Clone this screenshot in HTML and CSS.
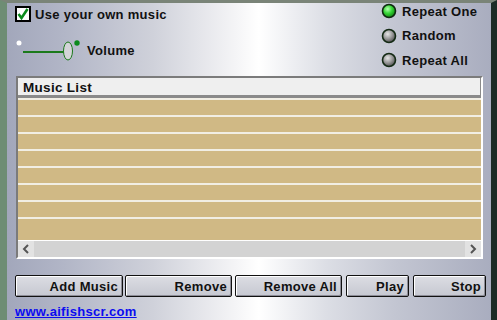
FILE: index.html
```html
<!DOCTYPE html>
<html lang="en">
<head>
    <meta charset="UTF-8">
    <title>Music Options</title>
    <link rel="stylesheet" href="styles.css">
</head>
<body>
    <div class="window">
        <div class="top">
            <div class="left-opts">
                <label class="check-row">
                    <svg class="checkbox" width="16" height="16" viewBox="0 0 16 16">
                        <rect x="1" y="1" width="14" height="14" fill="#fff" stroke="#000" stroke-width="2"/>
                        <path d="M3.5 8 L6.5 12 L12.5 3" fill="none" stroke="#0b8a1c" stroke-width="2.6"/>
                    </svg>
                    <span>Use your own music</span>
                </label>
                <div class="volume-row">
                    <svg class="slider" width="64" height="22" viewBox="0 0 64 22">
                        <circle cx="3" cy="4" r="2.5" fill="#fff"/>
                        <line x1="7" y1="13" x2="48" y2="13" stroke="#1b7a1b" stroke-width="2"/>
                        <ellipse cx="52" cy="12" rx="4.5" ry="9" fill="#d4d4d8" stroke="#1b7a1b" stroke-width="1"/>
                        <circle cx="61" cy="4" r="2.7" fill="#0b8a1c"/>
                    </svg>
                    <span>Volume</span>
                </div>
            </div>
            <div class="radios">
                <div class="radio-row">
                    <svg width="16" height="16" viewBox="0 0 16 16">
                        <defs>
                            <radialGradient id="gOn" cx="40%" cy="35%" r="65%">
                                <stop offset="0" stop-color="#b6ffb0"/>
                                <stop offset="0.5" stop-color="#38d838"/>
                                <stop offset="1" stop-color="#118a11"/>
                            </radialGradient>
                            <radialGradient id="gOff" cx="40%" cy="35%" r="65%">
                                <stop offset="0" stop-color="#e6e6e6"/>
                                <stop offset="0.55" stop-color="#9a9a9a"/>
                                <stop offset="1" stop-color="#555"/>
                            </radialGradient>
                        </defs>
                        <circle cx="8" cy="8" r="6.5" fill="url(#gOn)" stroke="#0f2a10" stroke-width="1.6"/>
                    </svg>
                    <span>Repeat One</span>
                </div>
                <div class="radio-row">
                    <svg width="16" height="16" viewBox="0 0 16 16">
                        <circle cx="8" cy="8" r="6.5" fill="url(#gOff)" stroke="#142a14" stroke-width="1.6"/>
                    </svg>
                    <span>Random</span>
                </div>
                <div class="radio-row">
                    <svg width="16" height="16" viewBox="0 0 16 16">
                        <circle cx="8" cy="8" r="6.5" fill="url(#gOff)" stroke="#142a14" stroke-width="1.6"/>
                    </svg>
                    <span>Repeat All</span>
                </div>
            </div>
        </div>

        <div class="list-box">
            <div class="list-head">Music List</div>
            <div class="list-rows">
                <div class="row"></div>
                <div class="row"></div>
                <div class="row"></div>
                <div class="row"></div>
                <div class="row"></div>
                <div class="row"></div>
                <div class="row"></div>
                <div class="row"></div>
            </div>
            <div class="hscroll">
                <span class="arrow">
                    <svg width="8" height="10" viewBox="0 0 8 10"><path d="M6 1 L2 5 L6 9" fill="none" stroke="#555" stroke-width="2"/></svg>
                </span>
                <span class="track"></span>
                <span class="arrow">
                    <svg width="8" height="10" viewBox="0 0 8 10"><path d="M2 1 L6 5 L2 9" fill="none" stroke="#555" stroke-width="2"/></svg>
                </span>
            </div>
        </div>

        <div class="buttons">
            <button class="btn w-add">Add Music</button>
            <button class="btn w-rem">Remove</button>
            <button class="btn w-remall">Remove All</button>
            <button class="btn w-play">Play</button>
            <button class="btn w-stop">Stop</button>
        </div>

        <a class="site-link" href="#">www.aifishscr.com</a>
    </div>
</body>
</html>
```

FILE: styles.css
```css
body {
    margin: 0;
    font-family: "Liberation Sans", Arial, sans-serif;
    font-size: 13px;
    font-weight: bold;
    letter-spacing: 0.3px;
    color: #111;
}
.window {
    width: 497px;
    height: 320px;
    box-sizing: border-box;
    border-left: 7px solid #6e8d74;
    border-right: 6px solid #1d2c26;
    border-top: 3px solid #7a8478;
    padding: 3px 0 0 8px;
    background: linear-gradient(90deg, #a2a7bb 0%, #b2b6c7 12%, #cfd1da 30%, #f4f4f6 47%, #ffffff 52%, #dcdee5 66%, #c3c6d2 80%, #a9adbf 100%);
    overflow: hidden;
}
.top {
    display: flex;
    justify-content: space-between;
    height: 70px;
}
.left-opts {
    display: flex;
    flex-direction: column;
}
.check-row {
    display: flex;
    align-items: center;
    gap: 4px;
    height: 16px;
}
.volume-row {
    display: flex;
    align-items: center;
    gap: 7px;
    margin-top: 17px;
    margin-left: 1px;
}
.radios {
    display: flex;
    flex-direction: column;
    gap: 8.5px;
    width: 110px;
    margin-top: -3px;
}
.radio-row {
    display: flex;
    align-items: center;
    gap: 5px;
    height: 16px;
}
.list-box {
    width: 467px;
    margin-left: 1px;
    height: 183px;
    box-sizing: border-box;
    border-top: 2px solid #7b7b7b;
    border-left: 2px solid #7b7b7b;
    border-right: 2px solid #fff;
    border-bottom: 2px solid #fff;
    background: #d0b985;
    display: flex;
    flex-direction: column;
}
.list-head {
    height: 20px;
    box-sizing: border-box;
    background: #efefef;
    border-bottom: 3px solid #8a8a8a;
    border-right: 1px solid #8a8a8a;
    padding: 2px 0 0 5px;
    font-size: 13.5px;
}
.list-rows {
    flex: 1;
    overflow: hidden;
}
.row {
    height: 17px;
    border-top: 2px solid #f1eee4;
    box-sizing: border-box;
}
.hscroll {
    display: flex;
    height: 16px;
    background: #d3d3d3;
    border-top: 1px solid #fff;
}
.hscroll .arrow {
    width: 16px;
    display: flex;
    align-items: center;
    justify-content: center;
    background: #e2e2e2;
}
.hscroll .track {
    flex: 1;
}
.buttons {
    display: flex;
    gap: 2px;
    margin-top: 16px;
}
.btn {
    height: 22px;
    box-sizing: border-box;
    border: 1px solid #111;
    border-radius: 2px;
    box-shadow: inset 1px 1px 0 #fff, inset -1px -1px 0 #8c8c96;
    background: linear-gradient(180deg, #dcdde3 0%, #c6c8d1 100%);
    font: bold 13px "Liberation Sans", Arial, sans-serif;
    letter-spacing: 0.3px;
    color: #111;
    text-align: right;
    padding: 0 4px 0 0;
}
.w-add { width: 108px; }
.w-rem { width: 107px; }
.w-remall { width: 107px; margin-left: 1px; }
.w-play { width: 63px; margin-left: 2px; }
.w-stop { width: 73px; margin-left: 2px; }
.site-link {
    display: inline-block;
    margin-top: 7px;
    color: #0b0bf0;
    text-decoration: underline;
}
```
